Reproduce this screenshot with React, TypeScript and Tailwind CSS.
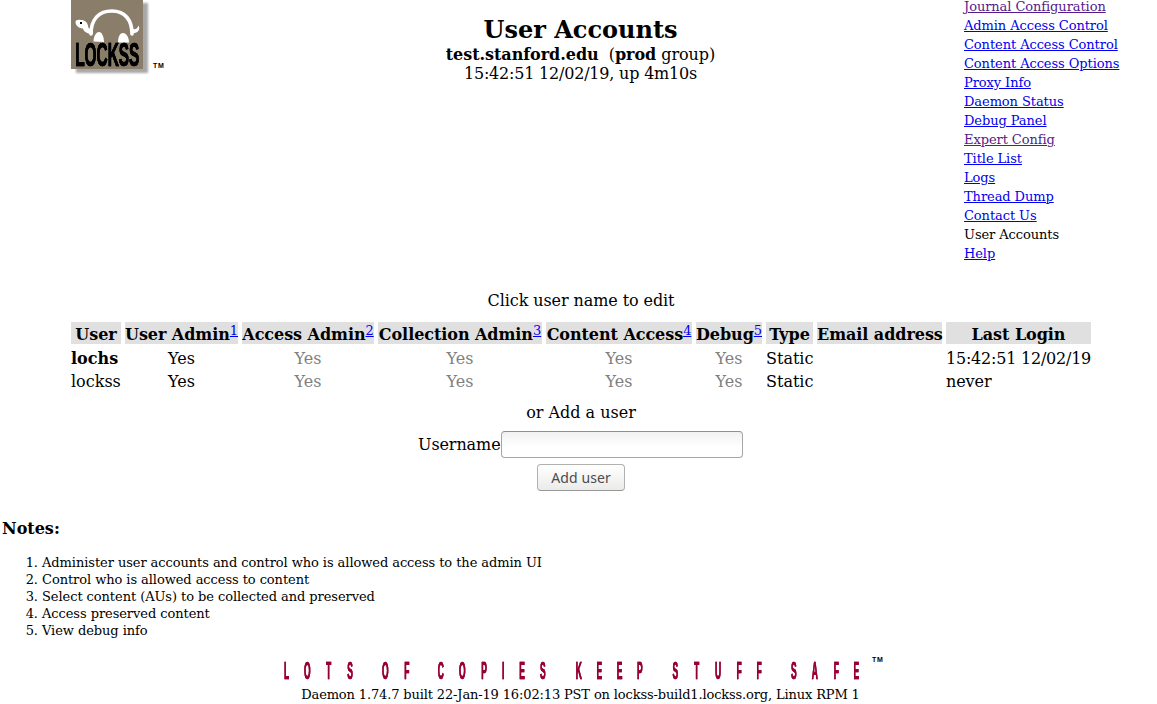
import React from "react";

type NavItem = { label: string; state?: "visited" | "current" };

const navItems: NavItem[] = [
  { label: "Journal Configuration", state: "visited" },
  { label: "Admin Access Control" },
  { label: "Content Access Control" },
  { label: "Content Access Options" },
  { label: "Proxy Info" },
  { label: "Daemon Status" },
  { label: "Debug Panel" },
  { label: "Expert Config", state: "visited" },
  { label: "Title List" },
  { label: "Logs" },
  { label: "Thread Dump" },
  { label: "Contact Us" },
  { label: "User Accounts", state: "current" },
  { label: "Help" },
];

const columns = [
  { label: "User", width: "w-[50px]" },
  { label: "User Admin", note: 1, width: "w-[113px]" },
  { label: "Access Admin", note: 2, width: "w-[132px]" },
  { label: "Collection Admin", note: 3, width: "w-[164px]" },
  { label: "Content Access", note: 4, width: "w-[146px]" },
  { label: "Debug", note: 5, width: "w-[66px]" },
  { label: "Type", width: "w-[47px]" },
  { label: "Email address", width: "w-[125px]" },
  { label: "Last Login", width: "w-[145px]" },
];

const users = [
  { name: "lochs", bold: true, login: "15:42:51 12/02/19" },
  { name: "lockss", bold: false, login: "never" },
];

const notes = [
  "Administer user accounts and control who is allowed access to the admin UI",
  "Control who is allowed access to content",
  "Select content (AUs) to be collected and preserved",
  "Access preserved content",
  "View debug info",
];

// Each word of the tagline with the centre of every letter.
const tagline: { word: string; centers: number[] }[] = [
  { word: "LOTS", centers: [287, 307.8, 329, 350.4] },
  { word: "OF", centers: [385.8, 407.2] },
  { word: "COPIES", centers: [441.2, 462.8, 484.4, 503.6, 522.4, 543.3] },
  { word: "KEEP", centers: [579.3, 599.7, 620, 640.2] },
  { word: "STUFF", centers: [675.8, 697.1, 718.4, 739.4, 759.6] },
  { word: "SAFE", centers: [794.2, 815.2, 836.7, 856.6] },
];

function Logo() {
  return (
    <svg width="97" height="78" viewBox="0 0 97 78" className="block">
      <defs>
        <filter id="soft" x="-10%" y="-10%" width="125%" height="125%">
          <feGaussianBlur stdDeviation="1.3" />
        </filter>
      </defs>
      <rect x="5" y="3" width="72" height="70" fill="#a8a8a8" filter="url(#soft)" />
      <rect width="72" height="69" fill="#8a7e6b" />
      <path
        d="M20 34C20 19 28 11 41 11C54 11 61 20 61 34"
        fill="none"
        stroke="#fff"
        strokeWidth="3.6"
        strokeLinecap="round"
      />
      <path
        d="M4.500 22C4.500 20 7 19.500 10 20C14 20 16.500 22.500 17 26C17.500 29 19 29.500 22 29L22 34C17 34 12.500 32 12 28.500C9.500 28.500 4.500 26.500 4.500 22Z"
        fill="#fff"
      />
      <rect x="9" y="22" width="2" height="2" fill="#000" />
      <path d="M60 28.500C64 30 66.500 29 67.500 25.500C70 30 66 34.500 60 33Z" fill="#fff" />
      <path d="M22.500 41.500C22.500 36.500 25 32 28 32C31 32 33 37 33 42Z" fill="#fff" />
      <path d="M47 42.500C47 37.500 48.500 33 52 33C55.500 33 58 38 58 42.500Z" fill="#fff" />
      <g className="drop-shadow-[0.8px_0_0_#000]">
        <text
          x="9"
          y="65.800"
          transform="scale(0.46 1)"
          fontSize="33.500"
          fontWeight="bold"
          fontFamily="Liberation Sans, sans-serif"
          stroke="#000"
          strokeWidth="0.7"
        >
          LOCKSS
        </text>
      </g>
      <text
        x="82"
        y="67.800"
        fontSize="7"
        fontWeight="bold"
        fontFamily="Liberation Sans, sans-serif"
        letterSpacing="0.8"
      >
        TM
      </text>
    </svg>
  );
}

function Tagline() {
  return (
    <svg width="621" height="30" viewBox="270 654 621 30" className="block">
      <g className="drop-shadow-[0.9px_0_0_#990033]">
        {tagline.map(({ word, centers }) => (
          <text
            key={word}
            x={centers.map((c) => (c - 0.4) / 0.36).join(" ")}
            y="679"
            transform="scale(0.36 1)"
            textAnchor="middle"
            fontSize="23.500"
            fontWeight="bold"
            fontFamily="Liberation Sans, sans-serif"
            fill="#990033"
            stroke="#990033"
            strokeWidth="0.5"
          >
            {word}
          </text>
        ))}
      </g>
      <text
        x="872"
        y="662"
        fontSize="7"
        fontWeight="bold"
        fontFamily="Liberation Sans, sans-serif"
        letterSpacing="0.8"
      >
        TM
      </text>
    </svg>
  );
}

export default function App() {
  return (
    <div className="h-[704px] w-[1157px] overflow-hidden bg-white font-['DejaVu_Serif',serif] text-[16px] leading-[19px] text-black">
      <header className="flex h-[291px] pl-[71px]">
        <div className="w-[97px] shrink-0">
          <Logo />
        </div>
        <div className="flex w-[796px] flex-col items-center pt-[16px] pl-[29px]">
          <div className="flex w-[767px] flex-col items-center">
            <h1 className="mb-px text-[24px] leading-[28px] font-bold">User Accounts</h1>
            <p className="tracking-[-0.05px]">
              <b>test.stanford.edu</b>&nbsp; (<b>prod</b> group)
            </p>
            <p className="tracking-[-0.2px]">15:42:51 12/02/19, up 4m10s</p>
          </div>
        </div>
        <nav className="-mt-[3px] text-[13px] tracking-[-0.08px] whitespace-nowrap">
          {navItems.map(({ label, state }) => (
            <div key={label}>
              {state === "current" ? (
                label
              ) : (
                <a
                  href="#"
                  className={state === "visited" ? "text-[#551a8b] underline" : "text-[#0000ee] underline"}
                >
                  {label}
                </a>
              )}
            </div>
          ))}
        </nav>
      </header>

      <main className="flex w-[1162px] flex-col items-center">
        <p className="tracking-[-0.09px]">Click user name to edit</p>
        <table className="mt-[8px] w-[1028px] table-fixed border-separate border-spacing-[4px] whitespace-nowrap">
          <thead>
            <tr>
              {columns.map(({ label, note, width }) => (
                <th
                  key={label}
                  className={`${width} h-[22px] bg-[#e0e0e0] p-0 pt-[3px] font-bold tracking-[-0.06px]`}
                >
                  {label}
                  {note && (
                    <a
                      href="#"
                      className="relative -top-[5px] text-[13px] leading-[0px] font-normal text-[#0000ee] underline"
                    >
                      {note}
                    </a>
                  )}
                </th>
              ))}
            </tr>
          </thead>
          <tbody className="relative top-px">
            {users.map(({ name, bold, login }) => (
              <tr key={name}>
                <td className={bold ? "p-0 font-bold" : "p-0"}>{name}</td>
                <td className="p-0 text-center">Yes</td>
                <td className="p-0 text-center text-[#808080]">Yes</td>
                <td className="p-0 text-center text-[#808080]">Yes</td>
                <td className="p-0 text-center text-[#808080]">Yes</td>
                <td className="p-0 text-center text-[#808080]">Yes</td>
                <td className="p-0">Static</td>
                <td className="p-0" />
                <td className={bold ? "p-0 tracking-[-0.22px]" : "p-0 tracking-[-0.1px]"}>{login}</td>
              </tr>
            ))}
          </tbody>
        </table>
        <p className="mt-[9px]">or Add a user</p>
        <label className="mt-[9px] mr-px flex h-[27px] items-center">
          <span className="w-[83px] tracking-[-0.1px]">Username</span>
          <input
            type="text"
            className="h-[27px] w-[242px] rounded-[4px] border border-[#a6a6a4] border-t-[#8f8f8d] bg-linear-to-b from-[#f1f1f1] to-white to-60% px-2 outline-none"
          />
        </label>
        <button
          type="button"
          className="mt-[6px] h-[27px] w-[88px] rounded-[4px] border border-[#b0b0ae] border-b-[#989896] bg-linear-to-b from-white to-[#ebebea] font-['Noto_Sans',sans-serif] text-[14px] leading-[25px] tracking-[0.1px] text-[#4c4c4c]"
        >
          Add user
        </button>
      </main>

      <section className="mt-[28px] pl-[2px]">
        <h2 className="font-bold">Notes:</h2>
        <ol className="mt-[16px] list-decimal pl-[40px] text-[13px] leading-[17px] tracking-[-0.07px]">
          {notes.map((note) => (
            <li key={note}>{note}</li>
          ))}
        </ol>
      </section>

      <footer className="mt-[15px] flex w-[1161px] flex-col items-center">
        <Tagline />
        <p className="mt-[1px] text-[13px] tracking-[-0.14px]">
          Daemon 1.74.7 built 22-Jan-19 16:02:13 PST on lockss-build1.lockss.org, Linux RPM 1
        </p>
      </footer>
    </div>
  );
}
